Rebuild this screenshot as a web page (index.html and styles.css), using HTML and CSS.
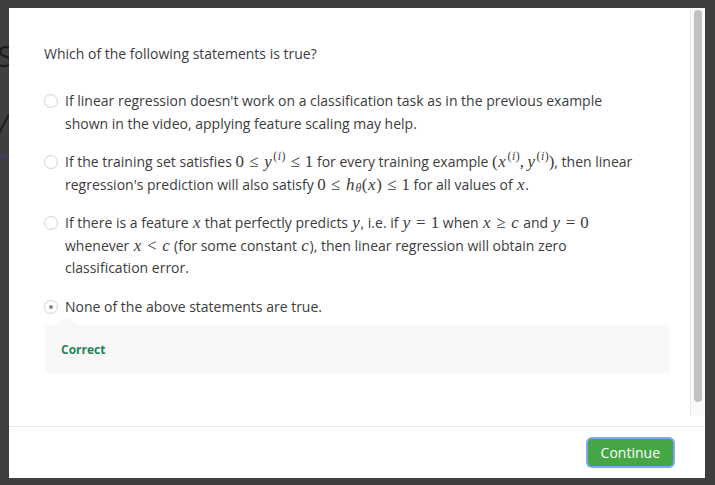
FILE: index.html
```html
<!DOCTYPE html>
<html>
<head>
<meta charset="utf-8">
<link rel="stylesheet" href="styles.css">
</head>
<body>
<div class="page">
  <div class="page-title">S</div>
  <div class="page-video"><span class="slash">/</span></div>
  <div class="page-rule"></div>
</div>

<div class="modal">
  <div class="modal-body">
    <div class="scroll-content">
      <p class="question">Which of the following statements is true?</p>
      <ul class="options">
        <li class="option">
          <span class="radio"></span>
          <span class="label">If linear regression doesn't work on a classification task as in the previous example shown in the video, applying feature scaling may help.</span>
        </li>
        <li class="option">
          <span class="radio"></span>
          <span class="label">If the training set satisfies <span class="m">0<span class="rel">≤</span><i>y</i><sup>(<i>i</i>)</sup><span class="rel">≤</span>1</span> for every training example <span class="m">(<i>x</i><sup>(<i>i</i>)</sup><span class="punct">,</span><i>y</i><sup>(<i>i</i>)</sup>)</span>, then linear regression's prediction will also satisfy <span class="m">0<span class="rel">≤</span><i>h</i><sub><i>θ</i></sub>(<i>x</i>)<span class="rel">≤</span>1</span> for all values of <span class="m"><i>x</i></span>.</span>
        </li>
        <li class="option">
          <span class="radio"></span>
          <span class="label">If there is a feature <span class="m"><i>x</i></span> that perfectly predicts <span class="m"><i>y</i></span>, i.e. if <span class="m"><i>y</i><span class="rel">=</span>1</span> when <span class="m"><i>x</i><span class="rel">≥</span><i>c</i></span> and <span class="m"><i>y</i><span class="rel">=</span>0</span> whenever <span class="m"><i>x</i><span class="rel">&lt;</span><i>c</i></span> (for some constant <span class="m"><i>c</i></span>), then linear regression will obtain zero classification error.</span>
        </li>
        <li class="option selected">
          <span class="radio"></span>
          <span class="label">None of the above statements are true.</span>
        </li>
      </ul>
      <div class="feedback"><span class="feedback-text">Correct</span></div>
    </div>
    <div class="scrollbar"><div class="thumb"></div></div>
  </div>
  <div class="modal-footer">
    <button class="btn-continue">Continue</button>
  </div>
</div>
</body>
</html>
```

FILE: styles.css
```css
html, body {
  margin: 0;
  padding: 0;
}

body {
  background: #3f3f3f;
  width: 715px;
  height: 485px;
  overflow: hidden;
  font-family: "Open Sans", "Noto Sans", sans-serif;
}

.page {
  padding-top: 38px;
  color: #1c1c1c;
}

.page-title {
  font-size: 30px;
  line-height: 36px;
  margin-left: -3px;
}

.page-video {
  margin-top: 33px;
  height: 48px;
}

.slash {
  font-family: "Liberation Serif", serif;
  font-style: italic;
  font-size: 40px;
  line-height: 40px;
  margin-left: -4px;
}

.page-rule {
  width: 9px;
  height: 2px;
  background: #3a3d78;
}

.modal {
  position: fixed;
  left: 9px;
  top: 8px;
  width: 696px;
  height: 470px;
  background: #ffffff;
  display: flex;
  flex-direction: column;
}

.modal-body {
  height: 408px;
  display: flex;
  margin-bottom: 10px;
}

.scroll-content {
  flex: 1;
  padding: 35px 21px 0 35px;
  color: #3c3c3c;
  font-size: 14px;
}

.question {
  margin: 0;
  line-height: 22px;
}

.options {
  list-style: none;
  margin: 25px 0 0 0;
  padding: 0;
}

.option {
  display: flex;
  align-items: flex-start;
  margin-bottom: 16px;
  line-height: 22.5px;
}

.option:last-child {
  margin-bottom: 0;
}

.radio {
  flex: none;
  width: 12px;
  height: 12px;
  border: 1px solid #d2d2d2;
  border-radius: 50%;
  margin-top: 4px;
  margin-right: 7px;
  position: relative;
  background: #fff;
}

.selected .radio::after {
  content: "";
  position: absolute;
  left: 4px;
  top: 4px;
  width: 4px;
  height: 4px;
  border-radius: 50%;
  background: #8a8a8a;
}

.label {
  max-width: 580px;
}

.m {
  font-family: "Liberation Serif", "DejaVu Serif", serif;
  font-size: 1.21em;
  line-height: 1;
  white-space: nowrap;
}

.m i {
  font-style: italic;
  margin: 0 0.04em;
}

.m sup, .m sub {
  font-size: 0.7em;
  line-height: 0;
  position: relative;
  vertical-align: baseline;
}

.m sup {
  top: -0.6em;
  margin-left: 0.08em;
}

.m sub {
  top: 0.25em;
}

.punct {
  margin-right: 0.17em;
}

.rel {
  margin: 0 0.3em;
}

.feedback {
  position: relative;
  margin-top: 7px;
  margin-left: 1px;
  background: #f8f8f8;
  padding: 13px 16px;
  line-height: 21px;
}

.feedback::before {
  content: "";
  position: absolute;
  left: 11px;
  top: -8px;
  border-left: 11px solid transparent;
  border-right: 11px solid transparent;
  border-bottom: 8px solid #f8f8f8;
}

.feedback-text {
  color: #1f8354;
  font-weight: 700;
  font-size: 12px;
}

.scrollbar {
  flex: none;
  width: 14px;
  border-left: 1px solid #e8e8e8;
  background: #fafafa;
  padding-top: 2px;
}

.thumb {
  width: 8px;
  height: 392px;
  margin-left: 3px;
  background: #c1c1c1;
  border-radius: 4px;
}

.modal-footer {
  flex: 1;
  border-top: 1px solid #e6e6e6;
  display: flex;
  justify-content: flex-end;
  align-items: center;
  padding-right: 32px;
}

.btn-continue {
  height: 27px;
  padding: 0 13px;
  border: none;
  border-radius: 4px;
  background: #44a644;
  color: #ffffff;
  font-family: "Open Sans", "Noto Sans", sans-serif;
  font-size: 14px;
  box-shadow: 0 0 0 2px #7ea8f4;
  cursor: pointer;
}
```
